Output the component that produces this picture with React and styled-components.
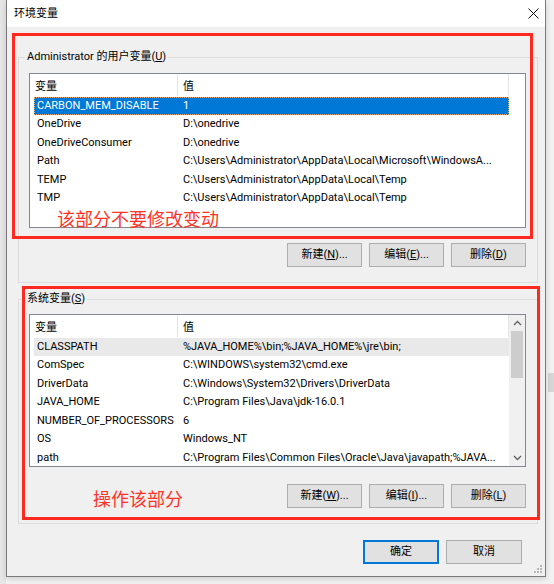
import React from 'react';
import styled, { createGlobalStyle } from 'styled-components';

const GlobalStyle = createGlobalStyle`
  html, body {
    margin: 0;
    padding: 0;
  }
  body {
    background: #f0f0f0;
    font-family: Roboto, "Noto Sans CJK SC", sans-serif;
    font-size: 11px;
    color: #000;
  }
`;

const Desktop = styled.div`
  width: 554px;
  height: 584px;
  overflow: hidden;
  position: relative;
  box-sizing: border-box;
  padding-left: 6px;
  background: linear-gradient(to right, #e6e6e6 0 6px, #f2f2f2 6px);
`;

const Window = styled.div`
  position: relative;
  width: 540px;
  height: 577px;
  box-sizing: border-box;
  border: 1px solid #7a7a7a;
  border-top: none;
  background: #f0f0f0;
  display: flex;
  flex-direction: column;
  box-shadow: 0 2px 6px rgba(0, 0, 0, 0.15);
`;

const TitleBar = styled.div`
  height: 27px;
  flex-shrink: 0;
  background: #fff;
  display: flex;
  align-items: center;
  justify-content: space-between;
  padding: 0 6px 0 7px;
`;

const Title = styled.span`
  font-size: 11px;
  line-height: 16px;
`;

const Body = styled.div`
  display: flex;
  flex-direction: column;
  padding: 0 7px 0 11px;
`;

const Group = styled.fieldset`
  margin: ${p => p.$top}px 0 0;
  padding: ${p => p.$padTop}px 11px 15px 10px;
  border: 1px solid #dcdcdc;
  min-width: 0;
`;

const Legend = styled.legend`
  padding: 0 2px;
  margin-left: -4px;
  font-size: 11px;
  line-height: 16px;
`;

const Acc = styled.span`
  text-decoration: underline;
  text-underline-offset: 1px;
`;

const ListView = styled.div`
  height: ${p => p.$h}px;
  box-sizing: border-box;
  border: 1px solid #828790;
  background: #fff;
  display: flex;
`;

const ListMain = styled.div`
  flex: 1;
  min-width: 0;
  display: flex;
  flex-direction: column;
`;

const Header = styled.div`
  display: flex;
  height: 22px;
  flex-shrink: 0;
`;

const HeaderCell = styled.div`
  width: ${p => p.$w}px;
  box-sizing: border-box;
  padding-left: 5px;
  border-right: 1px solid #e5e5e5;
  line-height: 26px;
`;

const Rows = styled.div`
  display: flex;
  flex-direction: column;
  padding: 0.5px 0 0 4px;
`;

const Row = styled.div`
  width: 475px;
  height: 18.5px;
  display: grid;
  grid-template-columns: 144px 1fr;
  align-items: center;
  box-sizing: border-box;
  background: ${p => (p.$selected ? '#0078d7' : p.$hover ? '#e9e9e9' : 'transparent')};
  color: ${p => (p.$selected ? '#fff' : '#000')};
  outline: ${p => (p.$selected ? '1px dotted #e8a46a' : 'none')};
  outline-offset: -1px;
  white-space: nowrap;
`;

const Cell = styled.span`
  padding-left: ${p => p.$pad}px;
  overflow: hidden;
  line-height: 18px;
`;

const Note = styled.div`
  color: #ff3326;
  font-family: "Noto Sans CJK SC", sans-serif;
  font-size: 18px;
  line-height: 18px;
  padding: 1px 0 0 ${p => p.$left}px;
  white-space: nowrap;
`;

const ScrollBar = styled.div`
  width: 16px;
  flex-shrink: 0;
  background: #f0f0f0;
  display: flex;
  flex-direction: column;
  align-items: center;
`;

const ScrollArrow = styled.div`
  height: 16px;
  width: 100%;
  display: flex;
  align-items: center;
  justify-content: center;
`;

const Thumb = styled.div`
  width: 12px;
  height: 47px;
  background: #cdcdcd;
`;

const ScrollTrack = styled.div`
  flex: 1;
`;

const ButtonRow = styled.div`
  display: flex;
  justify-content: flex-end;
  align-items: flex-start;
  gap: 7px;
  margin-top: ${p => p.$top}px;
`;

const Btn = styled.button`
  width: ${p => p.$w || 75}px;
  height: 24px;
  box-sizing: border-box;
  padding: 0;
  border: 1px solid ${p => (p.$default ? '#0078d7' : '#adadad')};
  box-shadow: ${p => (p.$default ? 'inset 0 0 0 1px #0078d7' : 'none')};
  background: #e1e1e1;
  color: #000;
  font-family: inherit;
  font-size: 11px;
  line-height: 16px;
`;

const RowNote = styled.span`
  color: #ff3326;
  font-family: "Noto Sans CJK SC", sans-serif;
  font-size: 18px;
  line-height: 20px;
  margin: 4px auto 0 64px;
`;

const Footer = styled.div`
  display: flex;
  justify-content: flex-end;
  gap: 7px;
  margin-top: 16px;
  padding-right: 16px;
`;

const Mark = styled.div`
  position: absolute;
  left: ${p => p.$x}px;
  top: ${p => p.$y}px;
  width: ${p => p.$w}px;
  height: ${p => p.$h}px;
  box-sizing: border-box;
  border: 3px solid #fe2a1f;
  pointer-events: none;
`;

const Grip = styled.svg`
  position: absolute;
  right: 2px;
  bottom: 2px;
`;

const BackBlock = styled.div`
  position: absolute;
  left: 548px;
  top: 373px;
  width: 6px;
  height: 19px;
  background: #d6d6d6;
`;

const userVars = [
  ['CARBON_MEM_DISABLE', '1'],
  ['OneDrive', 'D:\\onedrive'],
  ['OneDriveConsumer', 'D:\\onedrive'],
  ['Path', 'C:\\Users\\Administrator\\AppData\\Local\\Microsoft\\WindowsA...'],
  ['TEMP', 'C:\\Users\\Administrator\\AppData\\Local\\Temp'],
  ['TMP', 'C:\\Users\\Administrator\\AppData\\Local\\Temp'],
];

const sysVars = [
  ['CLASSPATH', '%JAVA_HOME%\\bin;%JAVA_HOME%\\jre\\bin;'],
  ['ComSpec', 'C:\\WINDOWS\\system32\\cmd.exe'],
  ['DriverData', 'C:\\Windows\\System32\\Drivers\\DriverData'],
  ['JAVA_HOME', 'C:\\Program Files\\Java\\jdk-16.0.1'],
  ['NUMBER_OF_PROCESSORS', '6'],
  ['OS', 'Windows_NT'],
  ['path', 'C:\\Program Files\\Common Files\\Oracle\\Java\\javapath;%JAVA...'],
];

const Chevron = ({ up }) => (
  <svg width="9" height="6" viewBox="0 0 9 6">
    <path
      d={up ? 'M1 5 L4.5 1.5 L8 5' : 'M1 1 L4.5 4.5 L8 1'}
      fill="none"
      stroke="#606060"
      strokeWidth="1.3"
    />
  </svg>
);

const VarList = ({ rows, height, selected, hover, scroll, children }) => (
  <ListView $h={height}>
    <ListMain>
      <Header>
        <HeaderCell $w={148}>变量</HeaderCell>
        <HeaderCell $w={331}>值</HeaderCell>
      </Header>
      <Rows>
        {rows.map(([name, value], i) => (
          <Row key={name} $selected={i === selected} $hover={i === hover}>
            <Cell $pad={3}>{name}</Cell>
            <Cell $pad={5}>{value}</Cell>
          </Row>
        ))}
      </Rows>
      {children}
    </ListMain>
    {scroll && (
      <ScrollBar>
        <ScrollArrow><Chevron up /></ScrollArrow>
        <Thumb />
        <ScrollTrack />
        <ScrollArrow><Chevron /></ScrollArrow>
      </ScrollBar>
    )}
  </ListView>
);

export default function App() {
  return (
    <>
      <GlobalStyle />
      <Desktop>
        <BackBlock />
        <Window>
          <TitleBar>
            <Title>环境变量</Title>
            <svg width="11" height="11" viewBox="0 0 11 11">
              <path d="M0.5 0.5 L10.5 10.5 M10.5 0.5 L0.5 10.5" stroke="#111" strokeWidth="1" />
            </svg>
          </TitleBar>
          <Body>
            <Group $top={22} $padTop={8}>
              <Legend>
                Administrator 的用户变量(<Acc>U</Acc>)
              </Legend>
              <VarList rows={userVars} height={155} selected={0}>
                <Note $left={27}>该部分不要修改变动</Note>
              </VarList>
              <ButtonRow $top={15}>
                <Btn>新建(<Acc>N</Acc>)...</Btn>
                <Btn>编辑(<Acc>E</Acc>)...</Btn>
                <Btn>删除(<Acc>D</Acc>)</Btn>
              </ButtonRow>
            </Group>
            <Group $top={8} $padTop={7}>
              <Legend>
                系统变量(<Acc>S</Acc>)
              </Legend>
              <VarList rows={sysVars} height={153} hover={0} scroll />
              <ButtonRow $top={17}>
                <RowNote>操作该部分</RowNote>
                <Btn>新建(<Acc>W</Acc>)...</Btn>
                <Btn>编辑(<Acc>I</Acc>)...</Btn>
                <Btn>删除(<Acc>L</Acc>)</Btn>
              </ButtonRow>
            </Group>
            <Footer>
              <Btn $w={76} $default>确定</Btn>
              <Btn $w={76}>取消</Btn>
            </Footer>
          </Body>
          <Mark $x={5} $y={33} $w={521} $h={206} />
          <Mark $x={15} $y={286} $w={518} $h={234} />
          <Grip width="10" height="10" viewBox="0 0 10 10">
            {[[8, 2], [8, 5], [5, 5], [8, 8], [5, 8], [2, 8]].map(([x, y]) => (
              <rect key={`${x}-${y}`} x={x - 1} y={y - 1} width="2" height="2" fill="#b8b8b8" />
            ))}
          </Grip>
        </Window>
      </Desktop>
    </>
  );
}
